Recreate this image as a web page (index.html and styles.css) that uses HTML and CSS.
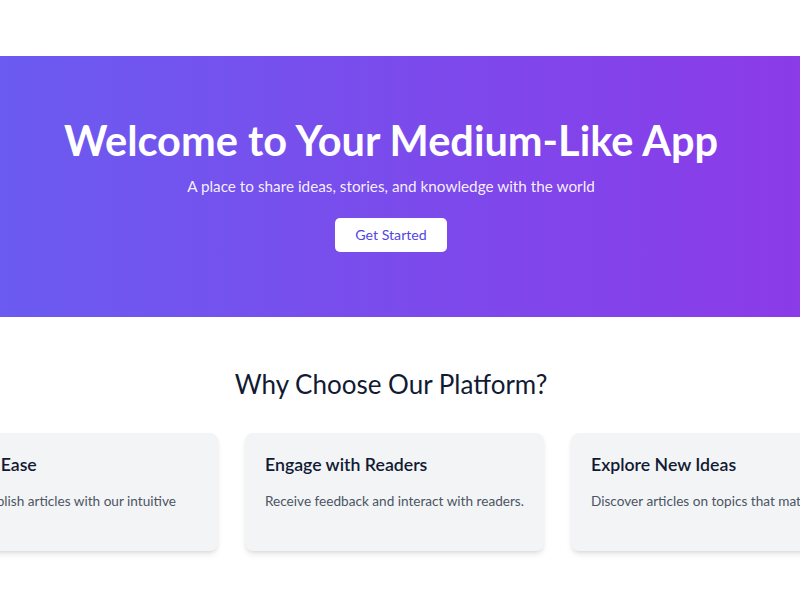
FILE: index.html
```html
<!DOCTYPE html>
<html lang="en">
<head>
<meta charset="utf-8">
<title>Medium-Like App</title>
<link rel="stylesheet" href="styles.css">
</head>
<body>
  <header class="topbar"></header>

  <section class="hero">
    <div class="hero-inner">
      <h1 class="hero-title">Welcome to Your Medium-Like App</h1>
      <p class="hero-subtitle">A place to share ideas, stories, and knowledge with the world</p>
      <a class="hero-button" href="#">Get Started</a>
    </div>
  </section>

  <section class="features">
    <h2 class="features-title">Why Choose Our Platform?</h2>
    <div class="features-row">
      <div class="card card-wide">
        <h3 class="card-title">Write with Ease</h3>
        <p class="card-text">Create and publish articles with our intuitive editor.</p>
      </div>
      <div class="card card-mid">
        <h3 class="card-title">Engage with Readers</h3>
        <p class="card-text card-text-single">Receive feedback and interact with readers.</p>
      </div>
      <div class="card card-last">
        <h3 class="card-title">Explore New Ideas</h3>
        <p class="card-text card-text-single">Discover articles on topics that matter to you.</p>
      </div>
    </div>
  </section>
</body>
</html>
```

FILE: styles.css
```css
html, body {
  overflow-x: hidden;
}

body {
  margin: 0;
  font-family: "Lato", "Noto Sans", sans-serif;
  color: #1f2937;
  background: #ffffff;
}

.topbar {
  height: 56px;
  background: #ffffff;
}

/* Hero banner */
.hero {
  background: linear-gradient(to right, #6b5bf0, #8b3be8);
  padding: 64px 0 65px;
}

.hero-inner {
  display: flex;
  flex-direction: column;
  align-items: center;
  text-align: center;
  padding-right: 18px;
}

.hero-title {
  margin: 0;
  font-size: 41.5px;
  line-height: 40px;
  font-weight: 700;
  color: #ffffff;
}

.hero-subtitle {
  margin: 12px 0 0;
  font-size: 15.3px;
  line-height: 28px;
  color: rgba(255, 255, 255, 0.93);
}

.hero-button {
  margin-top: 18px;
  display: inline-block;
  background: #ffffff;
  color: #4f46e5;
  text-decoration: none;
  font-size: 14.2px;
  line-height: 18px;
  padding: 8px 20px;
  border-radius: 5px;
}

/* Features */
.features {
  padding: 51px 0 40px;
}

.features-title {
  margin: 0 0 33px;
  padding-right: 18px;
  text-align: center;
  font-size: 26px;
  line-height: 32px;
  font-weight: 400;
  color: #111a33;
}

.features-row {
  display: flex;
  gap: 27px;
  margin-left: -107px;
}

.card {
  flex: 0 0 auto;
  box-sizing: border-box;
  padding: 18px 20px 14px;
  background: #f3f4f6;
  border-radius: 8px;
  box-shadow: 0 4px 6px -1px rgba(0, 0, 0, 0.1), 0 2px 4px -2px rgba(0, 0, 0, 0.1);
}

.card-wide {
  width: 325px;
}

.card-mid {
  width: 299px;
}

.card-last {
  width: 380px;
}

.card-title {
  margin: 0 0 10px;
  font-size: 17.7px;
  line-height: 28px;
  font-weight: 600;
  color: #111a33;
}

.card-text {
  margin: 0;
  font-size: 13.6px;
  line-height: 24px;
  color: #4b5563;
}

.card-text-single {
  white-space: nowrap;
}
```
